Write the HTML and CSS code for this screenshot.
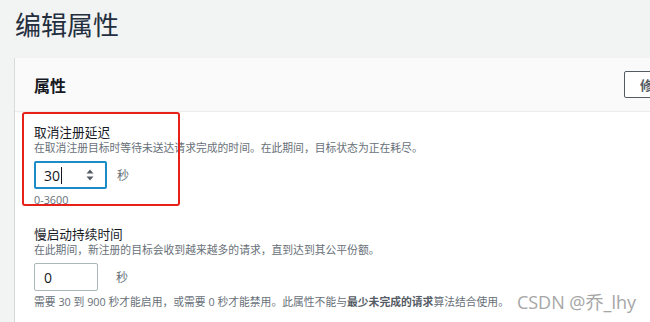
FILE: index.html
```html
<!DOCTYPE html>
<html>
<head>
    <meta charset="utf-8">
    <meta name="viewport" content="width=device-width, initial-scale=1.0">
    <link rel="stylesheet" href="styles.css">
</head>
<body>
    <div class="page">
        <h1 class="page-title">编辑属性</h1>

        <div class="card">
            <div class="card-header">
                <h2>属性</h2>
                <button class="btn">修改</button>
            </div>

            <div class="card-body">
                <div class="field highlight">
                    <div class="field-label">取消注册延迟</div>
                    <div class="field-desc">在取消注册目标时等待未送达请求完成的时间。在此期间，目标状态为正在耗尽。</div>
                    <div class="field-row">
                        <div class="input focused">
                            <span class="value">30</span><span class="caret"></span>
                            <svg class="spinner" viewBox="0 0 10 14" width="10" height="14">
                                <path d="M1.5 5.5 L5 1.5 L8.5 5.5 Z" fill="#545b64"/>
                                <path d="M1.5 8.5 L5 12.5 L8.5 8.5 Z" fill="#545b64"/>
                            </svg>
                        </div>
                        <span class="unit">秒</span>
                    </div>
                    <div class="field-hint">0-3600</div>
                </div>

                <div class="field second">
                    <div class="field-label">慢启动持续时间</div>
                    <div class="field-desc">在此期间，新注册的目标会收到越来越多的请求，直到达到其公平份额。</div>
                    <div class="field-row">
                        <div class="input small">
                            <span class="value">0</span>
                        </div>
                        <span class="unit">秒</span>
                    </div>
                    <div class="field-hint">需要 30 到 900 秒才能启用，或需要 0 秒才能禁用。此属性不能与<b>最少未完成的请求</b>算法结合使用。</div>
                </div>
            </div>
        </div>
    </div>

    <div class="watermark">CSDN @乔_lhy</div>
</body>
</html>
```

FILE: styles.css
```css
body {
    margin: 0;
    background: #f2f3f3;
    font-family: "Open Sans", "Noto Sans CJK SC", sans-serif;
    color: #16191f;
    overflow: hidden;
    height: 322px;
    position: relative;
}

.page {
    padding: 9px 0 0 15px;
}

.page-title {
    margin: 0;
    font-size: 26px;
    line-height: 32px;
    font-weight: 400;
    color: #232f3e;
}

.card {
    margin-top: 17px;
    width: 697px;
    background: #fff;
    box-shadow: -1px 0 0 #d5dbdb, 0 1px 1px rgba(0,43,102,0.1);
}

.card-header {
    height: 54px;
    box-sizing: border-box;
    padding: 0 18px 0 19px;
    display: flex;
    align-items: center;
    justify-content: space-between;
    background: #fafafa;
    border-bottom: 1px solid #eaeded;
}

.card-header h2 {
    margin: 0;
    font-size: 16px;
    font-weight: 700;
    color: #16191f;
    padding-top: 1px;
}

.btn {
    width: 70px;
    height: 27px;
    border: 1px solid #545b64;
    border-radius: 2px;
    background: #fff;
    color: #545b64;
    font-family: "Noto Sans CJK SC", sans-serif;
    font-size: 13px;
    font-weight: 700;
    text-align: left;
    padding-left: 15px;
}

.card-body {
    padding: 0 19px 20px 19px;
}

.field-label {
    font-size: 12.7px;
    line-height: 17px;
}

.field-desc {
    font-size: 10.8px;
    line-height: 14px;
    color: #687078;
    white-space: nowrap;
}

.field-row {
    margin-top: 6px;
    display: flex;
    align-items: center;
}

.input {
    width: 73px;
    height: 28px;
    box-sizing: border-box;
    border: 1px solid #aab7b8;
    border-radius: 2px;
    background: #fff;
    display: flex;
    align-items: center;
    padding-left: 9px;
    font-size: 14px;
    color: #16191f;
}

.input.focused {
    border: 2px solid #1c8bc7;
    padding-left: 8px;
}

.input.small {
    width: 64px;
}

.caret {
    width: 1px;
    height: 17px;
    background: #16191f;
    margin-left: 1px;
}

.spinner {
    margin-left: auto;
    margin-right: 10px;
}

.unit {
    margin-left: 10px;
    font-size: 12px;
    color: #687078;
}

.field.second .unit {
    margin-left: 18px;
}

.field-hint {
    margin-top: 4px;
    font-size: 10.8px;
    line-height: 14px;
    color: #687078;
    white-space: nowrap;
}

.field-hint b {
    color: #545b64;
}

/* red annotation frame drawn over the first field */
.highlight {
    position: relative;
    margin-left: -12px;
    width: 158px;
    height: 94px;
    box-sizing: border-box;
    padding: 12px 0 0 12px;
}

.highlight::after {
    content: "";
    position: absolute;
    inset: 0;
    border: 2px solid #e8201a;
    border-radius: 3px;
    pointer-events: none;
}

.second {
    margin-top: 20px;
}

.watermark {
    position: absolute;
    right: 14px;
    bottom: 8px;
    font-family: "Open Sans", "Noto Sans CJK SC", sans-serif;
    font-size: 18px;
    color: #a6a6a6;
    text-shadow: 0 0 2px #fff;
}
```
